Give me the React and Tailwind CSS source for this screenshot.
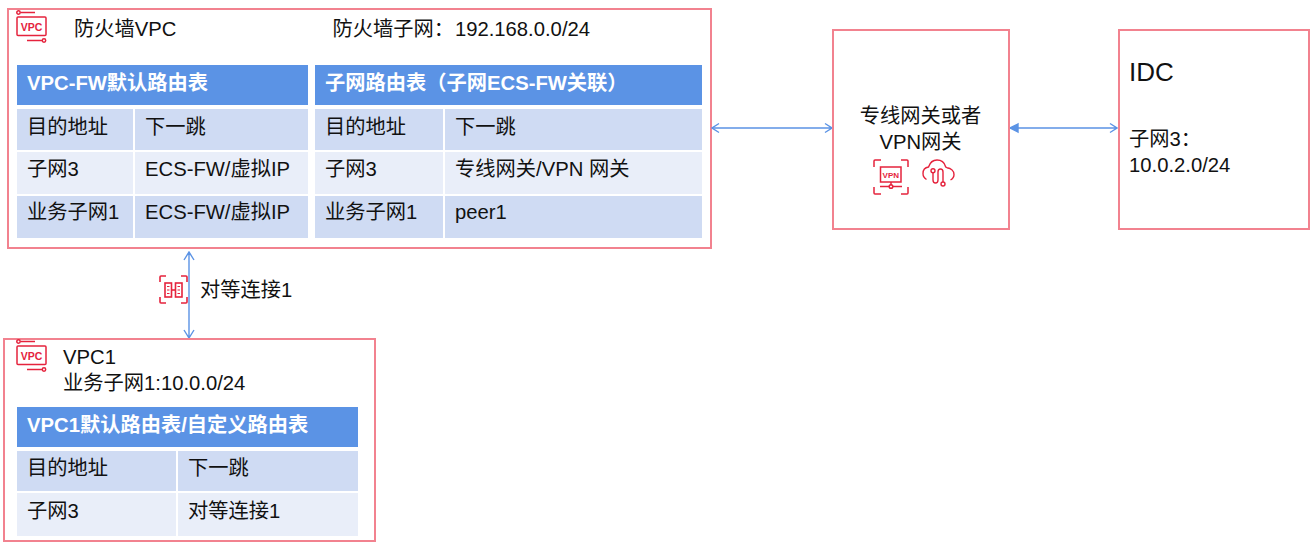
const fontStack = { fontFamily: '"Liberation Sans", "Noto Sans CJK SC", sans-serif' };

function VpcIcon() {
  return (
    <svg viewBox="0 0 32 35" className="w-8 h-[35px] shrink-0" fill="none" stroke="#e5233d" strokeWidth="1.5">
      <circle cx="2.5" cy="2.500" r="1.700" />
      <path d="M4.500 2.500H19" />
      <rect x="1" y="7" width="29" height="18.500" rx="1" />
      <path d="M11 30.500h15" />
      <circle cx="28" cy="30.500" r="1.700" />
      <text x="15.500" y="20.500" textAnchor="middle" fontSize="10.500" fontWeight="700" fill="#e5233d" stroke="none" fontFamily="Liberation Sans">VPC</text>
    </svg>
  );
}

function PeerIcon() {
  return (
    <svg viewBox="0 0 29 29" className="w-[29px] h-[29px] shrink-0" fill="none" stroke="#e5233d" strokeWidth="1.600">
      <path d="M1 7V2q0-1 1-1h5M22 1h5q1 0 1 1v5M28 22v5q0 1-1 1h-5M7 28H2q-1 0-1-1v-5" />
      <rect x="6" y="8" width="6.500" height="14" />
      <rect x="16.500" y="8" width="6.500" height="14" />
      <path d="M12.500 15h4" />
      <path d="M8 11.500h2.500M8 15h2.500M8 18.500h2.500M18.500 11.500H21M18.500 15H21M18.500 18.500H21" strokeWidth="1.200" />
    </svg>
  );
}

function VpnIcon() {
  return (
    <svg viewBox="0 0 36 36" className="w-9 h-9 shrink-0" fill="none" stroke="#e5233d" strokeWidth="1.500">
      <path d="M1 8V2q0-1 1-1h6M28 1h6q1 0 1 1v6M35 28v6q0 1-1 1h-6M8 35H2q-1 0-1-1v-6" />
      <rect x="7.500" y="8" width="20.500" height="15" />
      <text x="17.800" y="18.500" textAnchor="middle" fontSize="8" fontWeight="700" fill="#e5233d" stroke="none" fontFamily="Liberation Sans">VPN</text>
      <path d="M18 23v3.500M7 27.500h9M20 27.500h9" />
      <circle cx="18" cy="27.500" r="1.800" />
    </svg>
  );
}

function CloudIcon() {
  return (
    <svg viewBox="0 0 33 30" className="w-[33px] h-[30px] shrink-0" fill="none" stroke="#e5233d" strokeWidth="1.400">
      <path d="M4.500 20.500C2 19 1 17 1 14.500c0-3.500 2.300-6 5.500-6.500C8 3.500 11.500 1 15 1c4 0 7.300 2.300 8.500 6.500 .2 .7 .8 1 1.500 1.200 4 .6 7 3.300 7 6.800 0 2.500-1.200 4.300-3.500 5.500" />
      <circle cx="11" cy="11.700" r="2" />
      <path d="M11 13.700V21q0 3 2.500 3t2.500-3V13q0-3 2.500-3t2.500 3v10" />
      <circle cx="21" cy="25" r="2" />
    </svg>
  );
}

function HArrow({ width, solid }) {
  return (
    <svg width={width} height="12" viewBox={`0 0 ${width} 12`} fill="none" stroke="#5b93e5" strokeWidth="1.400">
      <path d={`M1 6H${width - 1}M${width - 8} 1.500 ${width - 1} 6l-7 4.500`} />
      {solid ? (
        <path d="M1 6l8-4v8z" fill="#5b93e5" />
      ) : (
        <path d="M8 1.500 1 6l7 4.500" />
      )}
    </svg>
  );
}

function Cell({ row, children }) {
  return (
    <div className={`${row.h} ${row.pt} pl-[10px] leading-[28px] ${row.bg}`}>{children}</div>
  );
}

function RouteTable({ title, rows, cols, width }) {
  return (
    <div className={width}>
      <div className="h-10 bg-[#5b93e5] pl-[10px] pt-[4px] font-bold text-white leading-[28px]">{title}</div>
      <div className={`mt-1 grid ${cols} gap-[2px]`}>
        {rows.map((row, i) => (
          <div key={i} className="contents">
            <Cell row={row}>{row.cells[0]}</Cell>
            <Cell row={row}>{row.cells[1]}</Cell>
          </div>
        ))}
      </div>
    </div>
  );
}

export default function App() {
  return (
    <div className="relative w-[1313px] h-[548px] bg-white text-[20.25px] text-[#111]" style={fontStack}>
      {/* firewall vpc */}
      <div className="absolute left-[7px] top-[8px] w-[705px] h-[241px] border-2 border-[#f2828f] pl-2">
        <div className="h-[55px] flex items-start">
          <div className="ml-[-1px]"><VpcIcon /></div>
          <span className="ml-[26px] mt-[5px] leading-[28px]">防火墙VPC</span>
          <span className="ml-[156px] mt-[5px] leading-[28px]">防火墙子网：<span className="ml-[1px]">192.168.0.0/24</span></span>
        </div>
        <div className="flex gap-[7px]">
          <RouteTable
            width="w-[291px]"
            cols="grid-cols-[116px_173px]"
            title="VPC-FW默认路由表"
            rows={[
              { h: 'h-[41px]', pt: 'pt-[4px]', bg: 'bg-[#cfdbf3]', cells: ['目的地址', '下一跳'] },
              { h: 'h-[42px]', pt: 'pt-[3px]', bg: 'bg-[#e9eef9]', cells: ['子网3', 'ECS-FW/虚拟IP'] },
              { h: 'h-[42px]', pt: 'pt-[2px]', bg: 'bg-[#cfdbf3]', cells: ['业务子网1', 'ECS-FW/虚拟IP'] },
            ]}
          />
          <RouteTable
            width="w-[387px]"
            cols="grid-cols-[128px_257px]"
            title="子网路由表（子网ECS-FW关联）"
            rows={[
              { h: 'h-[41px]', pt: 'pt-[4px]', bg: 'bg-[#cfdbf3]', cells: ['目的地址', '下一跳'] },
              { h: 'h-[42px]', pt: 'pt-[3px]', bg: 'bg-[#e9eef9]', cells: ['子网3', '专线网关/VPN 网关'] },
              { h: 'h-[42px]', pt: 'pt-[2px]', bg: 'bg-[#cfdbf3]', cells: ['业务子网1', 'peer1'] },
            ]}
          />
        </div>
      </div>

      {/* arrows */}
      <div className="absolute left-[711px] top-[122px]"><HArrow width={122} /></div>
      <div className="absolute left-[1009px] top-[122px]"><HArrow width={109} solid /></div>
      <svg className="absolute left-[183px] top-[251px]" width="12" height="88" viewBox="0 0 12 88" fill="none" stroke="#5b93e5" strokeWidth="1.400">
        <path d="M6 1v86M1 9l5-8 5 8M1 79l5 8 5-8" />
      </svg>

      {/* peering */}
      <div className="absolute left-[159px] top-[275px] flex items-center gap-[12px]">
        <PeerIcon />
        <span className="mt-[1px] leading-[28px]">对等连接1</span>
      </div>

      {/* vpc1 */}
      <div className="absolute left-[3px] top-[338px] w-[373px] h-[204px] border-2 border-[#f2828f] pl-3">
        <div className="h-[67px] flex items-start">
          <div className="ml-[-1px] mt-[-1px]"><VpcIcon /></div>
          <div className="ml-[15px] leading-[26px] mt-[4px]">
            <div>VPC1</div>
            <div>业务子网1:10.0.0/24</div>
          </div>
        </div>
        <RouteTable
          width="w-[341px]"
          cols="grid-cols-[159px_180px]"
          title="VPC1默认路由表/自定义路由表"
          rows={[
            { h: 'h-10', pt: 'pt-[3px]', bg: 'bg-[#cfdbf3]', cells: ['目的地址', '下一跳'] },
            { h: 'h-[43px]', pt: 'pt-[4px]', bg: 'bg-[#e9eef9]', cells: ['子网3', '对等连接1'] },
          ]}
        />
      </div>

      {/* gateway */}
      <div className="absolute left-[832px] top-[29px] w-[178px] h-[201px] border-2 border-[#f2828f] pt-[72px] flex flex-col items-center">
        <div className="text-center leading-[26px] mr-[1px]">
          <div>专线网关或者</div>
          <div>VPN网关</div>
        </div>
        <div className="flex items-start gap-[13px] mt-[4px] mr-[14px]">
          <VpnIcon />
          <CloudIcon />
        </div>
      </div>

      {/* idc */}
      <div className="absolute left-[1118px] top-[29px] w-[192px] h-[201px] border-2 border-[#f2828f] pl-[9px]">
        <div className="mt-[23px] text-[26px] leading-[36px]">IDC</div>
        <div className="mt-[36px] leading-[26px]">
          <div>子网3：</div>
          <div>10.0.2.0/24</div>
        </div>
      </div>
    </div>
  );
}
